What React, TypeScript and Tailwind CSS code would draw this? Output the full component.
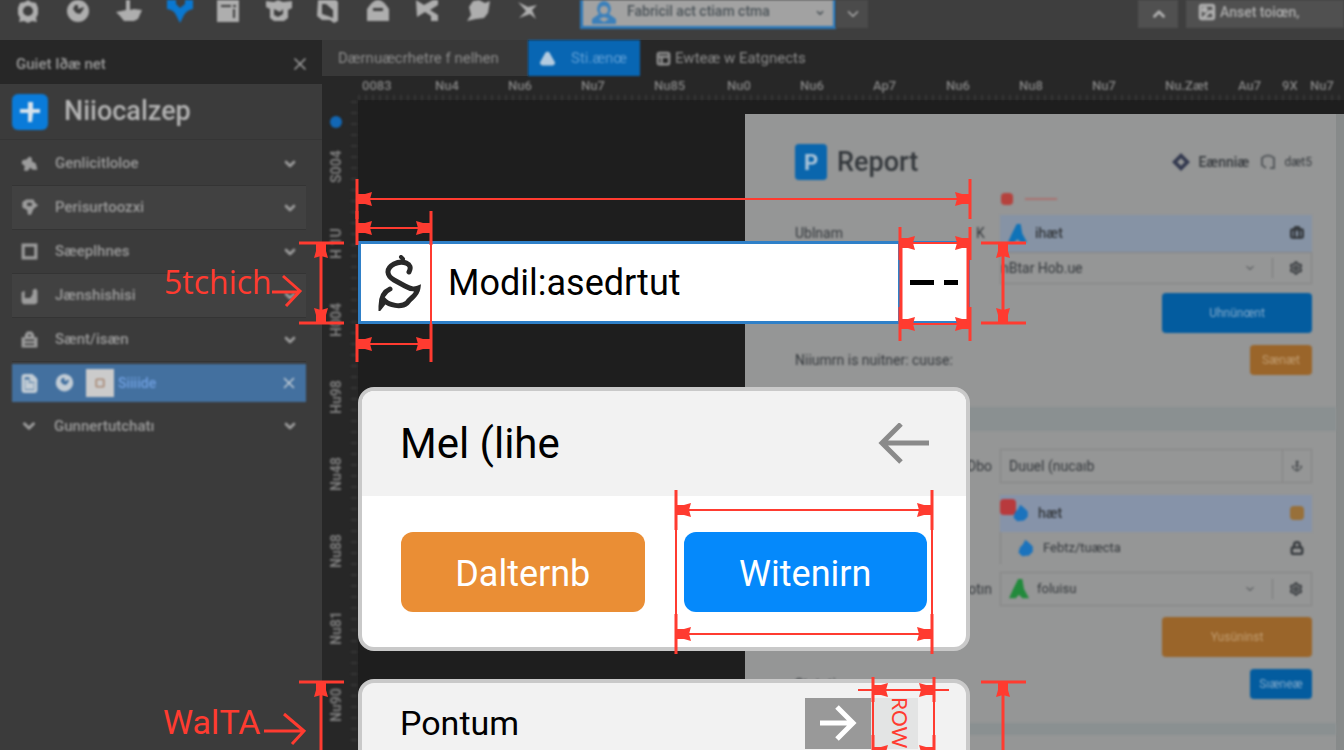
import React, { useState } from 'react';
import {
    Anchor, Briefcase, ChevronDown, ChevronUp, FileText, Image, Lock,
    PanelsTopLeft, Settings, Square, Triangle, X,
} from 'lucide-react';

const RED = '#ff3b30';

// solid glyphs on a 24px grid, cut-outs use the even-odd rule
const glyphs = {
    badge: 'M12 0L15 2L20 3L22 8V14L20 18L21 22L16 21L12 23L8 21L3 22L4 18L2 14V8L4 3L9 2ZM12 6A5 5 0 1 0 12 16A5 5 0 1 0 12 6Z',
    clock: 'M12 0A11 11 0 1 0 12 22A11 11 0 1 0 12 0ZM9 5L12 5V9L18 7L17 10L14 14L10 13L7 9Z',
    boat: 'M10 0H14V10L18 9L26 10L22 19L18 21H8L4 16L0 12L10 10Z',
    pin: 'M1 0H10V4L14 8L19 4V0H27V9Q21 10 18 15L14 23L10 15Q8 10 1 9Z',
    page: 'M1 0H23V22H1ZM5 5V7H15V5ZM17 5V7H20V5ZM17 9V18H19V9Z',
    pot: 'M0 1L8 2L12 0L17 2L26 1V8L22 10V18L18 21H8L4 18V9L0 7ZM8 9V15L12 17L17 14V9L14 12Z',
    note: 'M2 0H20L22 2V21L18 23L14 20H6L1 16ZM6 4V14L12 16L17 18V10L10 4Z',
    bag: 'M4 5Q12 -5 20 5L23 9V21H1V9ZM7 8V11H17V8Z',
    share: 'M0 0L8 5L17 0H22V5L14 10L22 15V21H15V16L9 12L1 17Z',
    blob: 'M7 1L13 0L19 3L24 1L22 13L18 18L10 19L1 21L5 15L3 7Z',
    cross: 'M2 2L12 7L21 5L16 10L20 19L14 14L3 18L10 11Z',
    user: 'M13 0A8 8 0 0 1 18 13L25 18V23H1V18L8 13A8 8 0 0 1 13 0ZM13 5A4 4 0 0 0 13 13A4 4 0 0 0 13 5ZM8 18L13 21L18 18L13 16Z',
    bot: 'M3 8L8 7L12 3L15 5V9L20 12L22 20H16L13 17L10 21H5L6 15L2 12Z',
    plug: 'M3 5L8 2H17L19 6L23 9L17 14L14 21H10L9 15L3 12ZM9 6V10H15V6Z',
    box: 'M2 2H22V22H2ZM6 6V18H18V6Z',
    picture: 'M2 8L6 6V15H13L16 10V5L20 3L22 6V21L19 23H4L2 20Z',
    case: 'M9 2H15L18 6V9H22V22H2V9H6V6ZM10 6V8H14V6ZM6 12V14H18V12ZM6 17V19H18V17Z',
    diamond: 'M12 0L24 12L12 24L0 12ZM12 7L7 12L12 17L17 12Z',
    drop: 'M11 1L16 5L21 10V17L16 22L7 23L2 18L4 11L8 7Z',
    tree: 'M11 0H16L18 12L24 23H16L12 19L8 23H0L5 12Z',
    plus: 'M10 2H15V9H22V13H15L14 22H10V13H2V9H10Z',
};

type GlyphName = keyof typeof glyphs;

const Glyph = ({ name, size = 24, className }: { name: GlyphName; size?: number; className?: string }) => (
    <svg width={size} height={size} viewBox="0 0 24 24" fill="currentColor" fillRule="evenodd" className={`shrink-0 overflow-visible ${className ?? ''}`}>
        <path d={glyphs[name]} />
    </svg>
);

const toolNames: GlyphName[] = ['badge', 'clock', 'boat', 'pin', 'page', 'pot', 'note', 'bag', 'share', 'blob', 'cross'];

const menuRows: { icon: GlyphName; label: string }[] = [
    { icon: 'bot', label: 'Genlicitloloe' },
    { icon: 'plug', label: 'Perisurtoozxi' },
    { icon: 'box', label: 'Sæeplhnes' },
    { icon: 'picture', label: 'Jænshishisi' },
    { icon: 'case', label: 'Sænt/isæn' },
];

const rulerMarks = ['0083', 'Nu4', 'Nu6', 'Nu7', 'Nu85', 'Nu0', 'Nu6', 'Ap7', 'Nu6', 'Nu8', 'Nu7', 'Nu.Zæt'];
const sideMarks = ['S004', 'H 1U', 'H004', 'Hu98', 'Nu48', 'Nu88', 'Nu81', 'Nu90'];

const Toolbar = () => (
    <header className="flex h-10 shrink-0 items-start bg-[#3e3e3e] text-[#aeaeae]">
        <div className="flex gap-[26px] pl-4 blur-[1px]">
            {toolNames.map((name) => (
                <button key={name} aria-label={name} className={name === 'pin' ? 'text-[#0a78d1]' : ''}><Glyph name={name} /></button>
            ))}
        </div>
        <div className="ml-10 flex h-[29px] w-[256px] items-center border-[3px] border-t-0 border-[#2c78b8] bg-[#a2a2a2] px-2 text-[#4b5358] blur-[1px]">
            <Glyph name="user" className="text-[#3b80bb]" />
            <input aria-label="Component" defaultValue="Fabricil act ctiam ctma" className="w-full min-w-0 bg-transparent pb-1 pl-3 text-[14px] font-medium outline-none" />
            <ChevronDown size={12} strokeWidth={4} />
        </div>
        <button aria-label="More" className="h-7 w-8 bg-[#4b4b4b] pl-2 blur-[1px]"><ChevronDown size={18} /></button>
        <button aria-label="Mode" className="ml-auto h-7 w-10 bg-[#505050] pl-3 blur-[1px]"><ChevronUp size={18} strokeWidth={4} /></button>
        <button className="ml-2 flex h-7 w-[158px] items-center gap-1 bg-[#505050] pb-1 pl-3 text-sm font-medium blur-[1px]">
            <Image size={18} strokeWidth={4} /> Anset toiœn,
        </button>
    </header>
);

const Sidebar = () => (
    <aside className="w-[322px] shrink-0 bg-[#3b3b3b] text-[#9c9c9c]">
        <div className="flex h-11 items-center justify-between bg-[#272727] pl-4 pr-3 pt-1">
            <h2 className="text-[15px] font-medium blur-[1px]">Guiet Iðæ net</h2>
            <button aria-label="Close panel" className="blur-[1px]"><X size={20} /></button>
        </div>
        <div className="flex h-14 items-center gap-4 border-b border-[#353535] pl-3">
            <div className="flex size-9 items-center justify-center rounded-md bg-[#0a7bd9] text-[#d6e2ec] blur-[1px]">
                <Glyph name="plus" />
            </div>
            <h1 className="text-[27px] font-medium text-[#b4b4b4] blur-[1px]">Niiocalzep</h1>
        </div>
        <ul className="pl-3 pr-4 pt-[2px] text-[15px] font-medium">
            {menuRows.map(({ icon, label }) => (
                <li key={label} className="border-b border-[#343434] even:bg-[#414141]">
                    <button className="flex h-[43px] w-full items-center px-2 blur-[1px]">
                        <Glyph name={icon} size={19} />
                        <span className="flex-1 pl-4 text-left">{label}</span>
                        <ChevronDown size={16} strokeWidth={4} />
                    </button>
                </li>
            ))}
            <li className="mt-[2px]">
                <button className="flex h-[38px] w-full items-center bg-[#43709f] px-2 text-[#c3cdd6] blur-[1px]">
                    <FileText size={19} strokeWidth={4} />
                    <Glyph name="clock" size={19} className="ml-4" />
                    <span className="ml-3 flex size-7 items-center justify-center bg-[#cbcbcb]">
                        <Square size={10} strokeWidth={4} className="text-[#a98a76]" />
                    </span>
                    <span className="flex-1 pl-1 text-left text-sm text-[#6f9fe0]">Siiiide</span>
                    <X size={18} />
                </button>
            </li>
            <li>
                <button className="flex h-11 w-full items-center px-2 pt-1 blur-[1px]">
                    <ChevronDown size={18} strokeWidth={4} />
                    <span className="flex-1 pl-4 text-left">Gunnertutchatı</span>
                    <ChevronDown size={16} strokeWidth={4} />
                </button>
            </li>
        </ul>
    </aside>
);

const Report = () => (
    <section className="flex flex-1 border-r-8 border-[#878a8a] bg-[#959696] text-[#34383c]">
        <div className="flex-1 blur-[1px]">
            <div className="flex flex-col pl-[50px] pr-6">
                <div className="flex items-center pt-7">
                    <div className="flex h-9 w-8 items-center justify-center rounded bg-[#0a66ad] text-[22px] font-bold text-[#a9c3d8]">P</div>
                    <h2 className="flex-1 pl-[10px] text-[27px] font-medium">Report</h2>
                    <Glyph name="diamond" size={18} className="text-[#343a50]" />
                    <span className="w-[70px] pl-2 text-sm font-medium">Eænniæ</span>
                    <svg width="16" height="16" viewBox="0 0 16 16" fill="none" stroke="#55595c" strokeWidth="2"><path d="M10 14H14V4Q8 -1 2 4V11L6 14" /></svg>
                    <span className="pl-2 text-xs">dæt5</span>
                </div>
                <div className="flex h-8 items-center gap-3 pl-[206px]">
                    <span className="size-3 rounded-sm bg-[#b5423d]" />
                    <span className="h-[2px] w-8 bg-[#a9726f]" />
                </div>
                <div className="flex">
                    <div className="w-[181px] pt-2 text-sm">Ublnam</div>
                    <div className="w-6 pt-2 text-sm">K</div>
                    <div className="flex-1">
                        <div className="flex h-[37px] items-center bg-[#8693a5] px-2">
                            <Glyph name="tree" size={19} className="text-[#0f73b8]" />
                            <span className="flex-1 pl-2 text-sm font-medium">ihæt</span>
                            <Briefcase size={14} strokeWidth={4} />
                        </div>
                        <div className="flex h-8 items-center border border-[#858585] pr-2">
                            <span className="flex-1 text-sm">nBtar Hob.ue</span>
                            <ChevronDown size={12} />
                            <span className="mx-4 h-5 w-px bg-[#7c7c7c]" />
                            <Settings size={14} strokeWidth={3} />
                        </div>
                    </div>
                </div>
                <button className="mt-[9px] h-10 w-[150px] self-end rounded-sm bg-[#035c9f] text-xs text-[#83aacb]">Uhnünœnt</button>
                <div className="mt-3 flex items-center justify-between">
                    <span className="text-sm">Niiumrn is  nuitner:  cuuse:</span>
                    <button className="h-[30px] w-[62px] rounded-sm bg-[#9a652a] text-xs text-[#c09c70]">Sænæt</button>
                </div>
            </div>
            <div className="mt-8 h-6 bg-[#8a9091]" />
            <div className="flex flex-col pl-[50px] pr-6 pt-[18px]">
                <label className="flex items-center">
                    <span className="w-[205px] pr-2 text-right text-sm">Dbo</span>
                    <span className="flex h-[34px] flex-1 items-center border border-[#858585] pr-2">
                        <input defaultValue="Duuel (nucaıb" className="min-w-0 flex-1 bg-transparent pl-2 text-sm outline-none" />
                        <span className="mr-2 h-8 w-px bg-[#858585]" />
                        <Anchor size={12} />
                    </span>
                </label>
                <div className="ml-[205px] mt-3 flex h-[37px] items-center bg-[#8693a9] px-2">
                    <span className="-ml-2 mb-3 size-4 rounded-sm bg-[#b83a3d]" />
                    <Glyph name="drop" size={18} className="-ml-1 text-[#1b73bd]" />
                    <span className="flex-1 pl-2 text-sm font-medium">hæt</span>
                    <span className="size-[14px] rounded-sm bg-[#98703a]" />
                </div>
                <div className="ml-[205px] flex h-8 items-center border-l border-[#858585] pl-4 pr-2">
                    <Glyph name="drop" size={18} className="text-[#1b73bd]" />
                    <span className="flex-1 pl-2 text-[13px]">Febtz/tuæcta</span>
                    <Lock size={14} strokeWidth={4} />
                </div>
                <div className="mt-2 flex items-center">
                    <span className="w-[205px] pr-2 text-right text-sm">otın</span>
                    <div className="flex h-[34px] flex-1 items-center border border-[#858585] px-2">
                        <Glyph name="tree" size={20} className="text-[#228a3c]" />
                        <span className="flex-1 pl-2 text-[13px]">foluisu</span>
                        <ChevronDown size={12} />
                        <span className="mx-4 h-5 w-px bg-[#7c7c7c]" />
                        <Settings size={14} strokeWidth={3} />
                    </div>
                </div>
                <button className="mt-[11px] h-10 w-[150px] self-end rounded-sm bg-[#9a652a] text-xs text-[#c09c70]">Yusüninst</button>
                <div className="mt-3 flex items-center justify-between">
                    <span className="text-sm">Statution</span>
                    <button className="h-[30px] w-[62px] rounded-sm bg-[#035c9f] text-xs text-[#83aacb]">Sıæneæ</button>
                </div>
            </div>
            <div className="mt-6 h-3 bg-[#8a9091]" />
        </div>
    </section>
);

const Workspace = () => (
    <main className="flex min-w-0 flex-1 flex-col bg-[#272727]">
        <nav className="flex h-9 shrink-0 items-stretch text-[15px] text-[#8d8d8d]">
            <a href="#document" className="flex w-[206px] items-center bg-[#383838] pl-4"><span className="blur-[1px]">Dærnuæcrhetre f nelhen</span></a>
            <a href="#layout" className="flex w-[112px] items-center gap-4 bg-[#0866b3] pl-3 text-[#5d9dd4] blur-[1px]">
                <Triangle size={15} strokeWidth={4} fill="#b3cbe0" className="text-[#b3cbe0]" />Sti.ænœ
            </a>
            <a href="#review" className="flex items-center gap-1 pl-4 blur-[1px]"><PanelsTopLeft size={15} strokeWidth={4} />Ewteæ w Eatgnects</a>
        </nav>
        <div className="relative h-6 shrink-0 overflow-hidden blur-[1px]">
            <div className="flex whitespace-nowrap pl-10 text-[13px] font-medium text-[#858585]">
                {rulerMarks.map((mark, i) => (
                    <span key={i} className="w-[73px] shrink-0">{mark}</span>
                ))}
                <span className="w-11 shrink-0">Au7</span>
                <span className="w-7 shrink-0">9X</span>
                <span>Nu7</span>
            </div>
            <svg className="absolute bottom-0 left-9 h-2 w-full">
                <defs>
                    <pattern id="ticks" width="7" height="8" patternUnits="userSpaceOnUse"><path d="M1 3V8" stroke="#484848" /></pattern>
                </defs>
                <rect width="100%" height="8" fill="url(#ticks)" />
            </svg>
        </div>
        <div className="flex min-h-0 flex-1">
            <div className="relative w-9 shrink-0 blur-[1px]">
                <div className="pl-2 pt-4">
                    <div className="size-3 rounded-md bg-[#1267b5]" />
                </div>
                <div className="flex flex-col pl-1 text-sm font-bold text-[#7c7c7c]">
                    {sideMarks.map((mark, i) => (
                        <span key={i} className="h-[77px] rotate-180 text-center [writing-mode:vertical-rl]">{mark}</span>
                    ))}
                </div>
                <svg className="absolute right-0 top-0 h-full w-2">
                    <defs>
                        <pattern id="vticks" width="8" height="11" patternUnits="userSpaceOnUse"><path d="M1 2H7" stroke="#454545" /></pattern>
                    </defs>
                    <rect width="8" height="100%" fill="url(#vticks)" />
                </svg>
            </div>
            <div className="flex flex-1 bg-[#1e1e1e] pl-[387px] pt-[14px]">
                <Report />
            </div>
        </div>
    </main>
);

const ARROW = 'M0 -5L8 -5L15 -7L13 0L15 7L8 5L0 5Z';

const HSpan = ({ x1, x2, y, top = 17, bottom = 17 }: { x1: number; x2: number; y: number; top?: number; bottom?: number }) => (
    <g>
        <path d={`M${x1} ${y}H${x2}`} strokeWidth="2" />
        <path d={`M${x1} ${y - top}V${y + bottom}M${x2} ${y - top}V${y + bottom}`} strokeWidth="3" />
        <path d={ARROW} transform={`translate(${x1} ${y})`} fill={RED} stroke="none" />
        <path d={ARROW} transform={`translate(${x2} ${y}) scale(-1 1)`} fill={RED} stroke="none" />
    </g>
);

const VSpan = ({ x, y1, y2 }: { x: number; y1: number; y2: number }) => (
    <g>
        <path d={`M${x} ${y1}V${y2}`} strokeWidth="3" />
        <path d={`M${x - 22} ${y1}H${x + 23}M${x - 22} ${y2}H${x + 23}`} strokeWidth="3" />
        <path d={ARROW} transform={`translate(${x} ${y1}) rotate(90)`} fill={RED} stroke="none" />
        <path d={ARROW} transform={`translate(${x} ${y2}) rotate(-90)`} fill={RED} stroke="none" />
    </g>
);

const Measurements = () => (
    <div className="pointer-events-none absolute inset-0 text-[#ff3b30]">
        <svg className="size-full" fill="none" stroke={RED}>
            <HSpan x1={357} x2={970} y={199} top={20} bottom={20} />
            <HSpan x1={357} x2={431} y={228} />
            <HSpan x1={357} x2={431} y={344} top={20} bottom={18} />
            <path d="M431 244V325M357 217V245" strokeWidth="2" />
            <HSpan x1={900} x2={970} y={243} top={16} />
            <HSpan x1={900} x2={970} y={324} />
            <path d="M901 243V324M968 243V324" strokeWidth="3" />
            <VSpan x={321} y1={243} y2={323} />
            <VSpan x={1003} y1={243} y2={323} />
            <HSpan x1={676} x2={932} y={510} top={20} bottom={20} />
            <HSpan x1={676} x2={932} y={634} top={20} bottom={20} />
            <path d="M676 530V615M932 530V615" strokeWidth="2" />
            <VSpan x={321} y1={682} y2={800} />
            <VSpan x={1003} y1={682} y2={800} />
            <HSpan x1={873} x2={934} y={690} top={13} bottom={12} />
            <path d="M858 690H949" strokeWidth="2" />
            <path d="M873 702V750M934 702V750" strokeWidth="2" />
            <HSpan x1={873} x2={934} y={752} />
            <path d="M272 292H300M283 276L300 291L286 306" strokeWidth="3" />
            <path d="M264 731H304M284 714L304 731L292 744" strokeWidth="3" />
        </svg>
        <span className="absolute left-[164px] top-[262px] font-['Open_Sans',sans-serif] text-[32px] leading-10">5tchich</span>
        <span className="absolute left-[163px] top-[702px] text-[34px] leading-10">WalTA</span>
        <span className="absolute left-[888px] top-[697px] font-['Lato',sans-serif] text-[21px] leading-6 [writing-mode:vertical-rl]">ROW</span>
    </div>
);

const Callouts = () => {
    const [value, setValue] = useState('Modil:asedrtut');

    return (
        <div className="absolute left-[358px] top-[241px] w-[612px] text-black">
            <div className="flex h-[83px] border-[3px] border-[#2f80c8] bg-white">
                <div className="flex w-[72px] items-center justify-center pl-1">
                    <svg width="44" height="56" viewBox="0 0 44 56" fill="none" stroke="#292929" strokeWidth="5" strokeLinecap="round">
                        <path d="M24 2L26 4" strokeWidth="4" />
                        <path d="M32 17C37 8 25 5 17 9C8 14 10 21 17 25L28 31C35 35 38 34 41 33C40 41 34 42 30 48C24 53 12 50 8 46L4 51C4 44 6 37 13 34" />
                    </svg>
                </div>
                <input
                    aria-label="Component name"
                    value={value}
                    onChange={(e) => setValue(e.target.value)}
                    className="min-w-0 flex-1 pl-[15px] text-[36px] outline-none"
                />
                <button aria-label="More options" className="flex w-[69px] items-center justify-center gap-[10px] border-l-[3px] border-[#2f80c8]">
                    <span className="h-[5px] w-6 bg-black" />
                    <span className="h-[5px] w-[14px] bg-black" />
                </button>
            </div>

            <section className="mt-[63px] overflow-hidden rounded-2xl border-4 border-[#c9c9c9] bg-white">
                <div className="flex h-[105px] items-center justify-between bg-[#f2f2f2] pl-[38px] pr-9">
                    <h2 className="text-[42px]">Mel (lihe</h2>
                    <button aria-label="Back">
                        <svg width="52" height="42" viewBox="0 0 52 42" fill="none" stroke="#8a8a8a" strokeWidth="5">
                            <path d="M51 20H4M23 1L4 20L23 39" />
                        </svg>
                    </button>
                </div>
                <div className="flex gap-[39px] px-[39px] pb-[35px] pt-9 text-[36px] text-white">
                    <button className="h-20 flex-1 rounded-xl bg-[#ea8e35] pt-1">Dalternb</button>
                    <button className="h-20 flex-1 rounded-xl bg-[#0589fb] pt-1">Witenirn</button>
                </div>
            </section>

            <section className="mt-7 overflow-hidden rounded-2xl border-4 border-[#c9c9c9] bg-[#f2f2f2]">
                <div className="flex h-20 items-center pl-[38px] pr-8">
                    <h2 className="flex-1 text-[34px]">Pontum</h2>
                    <button aria-label="Next" className="flex h-[51px] w-[66px] items-center justify-center bg-[#999999]">
                        <svg width="38" height="36" viewBox="0 0 38 36" fill="none" stroke="#ffffff" strokeWidth="5">
                            <path d="M1 18H33M18 2L34 18L18 34" />
                        </svg>
                    </button>
                    <div className="h-[51px] w-[63px] pr-4">
                        <div className="size-full bg-[#e3e4e4]" />
                    </div>
                </div>
            </section>
        </div>
    );
};

export default function App() {
    return (
        <div className="relative flex h-screen flex-col overflow-hidden bg-[#272727] font-['Roboto',sans-serif]">
            <Toolbar />
            <div className="flex min-h-0 flex-1">
                <Sidebar />
                <Workspace />
            </div>
            <Callouts />
            <Measurements />
        </div>
    );
}
